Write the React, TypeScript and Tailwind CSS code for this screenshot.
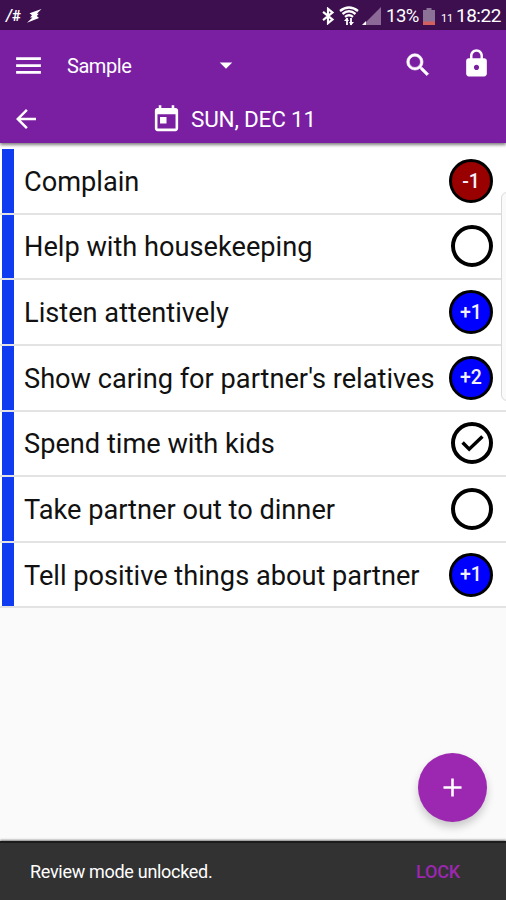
import type { ReactNode } from "react";

type Mark = "empty" | "check" | "minus" | "plus";

interface Item {
  label: string;
  mark: Mark;
  value?: string;
}

const items: Item[] = [
  { label: "Complain", mark: "minus", value: "-1" },
  { label: "Help with housekeeping", mark: "empty" },
  { label: "Listen attentively", mark: "plus", value: "+1" },
  { label: "Show caring for partner's relatives", mark: "plus", value: "+2" },
  { label: "Spend time with kids", mark: "check" },
  { label: "Take partner out to dinner", mark: "empty" },
  { label: "Tell positive things about partner", mark: "plus", value: "+1" },
];

function Icon({ className, children }: { className: string; children: ReactNode }) {
  return (
    <svg viewBox="0 0 24 24" fill="currentColor" className={`block shrink-0 ${className}`}>
      {children}
    </svg>
  );
}

function StatusBar() {
  return (
    <div className="flex h-[30px] shrink-0 items-center bg-[#3d0f4f] pl-[6px] pr-[4px] pt-[2px] text-white">
      <span className="text-[16px] font-medium italic leading-none">/</span>
      <span className="text-[15px] font-bold leading-none">#</span>
      <svg viewBox="0 0 15 14" className="ml-[6px] h-[14px] w-[15px]" fill="currentColor">
        <path d="M14.500 0 2.500 4.200 5 6.300 3 8.400h2.500L0 13.800l12-4.800-2.200-2 2-2.200H9.800z" />
      </svg>
      <div className="flex-1" />
      <svg viewBox="0 0 14 20" className="h-[18px] w-[14px]" fill="none" stroke="currentColor" strokeWidth="2.4">
        <path d="M1.500 5.500 12 14l-5 4V2l5 4L1.500 14.500" />
      </svg>
      <svg viewBox="0 0 20 20" className="ml-[4px] h-[20px] w-[20px]" fill="none" stroke="currentColor">
        <path d="M1 5Q10-2 19 5M3.500 8Q10 2.500 16.500 8M6 10.800q4-3 8 0" strokeWidth="2.300" />
        <path d="M8 12v7M12 12v7" strokeWidth="1.800" />
        <path d="m5 15 3-3.500 2 3.500zM10 16l2 3.500 3-3.500z" fill="currentColor" stroke="none" />
      </svg>
      <svg viewBox="0 0 20 19" className="ml-[3px] h-[19px] w-[20px]">
        <path d="M19 0v18H1z" fill="#8d6998" />
        <path d="M4 14v4H0z" fill="white" />
      </svg>
      <span className="ml-[4px] w-[33px] whitespace-nowrap text-[18.500px] leading-[20px] tracking-[-0.500px]">13%</span>
      <svg viewBox="0 0 12 17" className="ml-[4px] h-[17px] w-[12px]">
        <path d="M3.500 0h5v2H12v15H0V2h3.500z" fill="#8d7297" />
        <path d="M0 13.500h12V17H0z" fill="#d1605e" />
      </svg>
      <span className="ml-[6px] w-[11px] pt-[5px] text-[11px] leading-none tracking-[-0.300px]">11</span>
      <span className="ml-[4px] w-[46px] whitespace-nowrap text-[19px] leading-[20px] tracking-[-0.500px]">18:22</span>
    </div>
  );
}

function Header() {
  return (
    <header className="z-10 h-[113px] shrink-0 bg-[#7b1fa2] text-white shadow-[0_2px_3px_rgba(0,0,0,0.5)]">
      <div className="flex h-[70px] items-center">
        <Icon className="ml-[12px] size-[33px]">
          <path d="M3 18h18v-2H3v2zm0-5h18v-2H3v2zm0-7v2h18V6H3z" />
        </Icon>
        <span className="ml-[22px] w-[136px] pt-px text-[20px] leading-[24px] tracking-[-0.450px]">Sample</span>
        <Icon className="ml-[8px] size-[30px]">
          <path d="m7 10 5 5 5-5z" />
        </Icon>
        <div className="flex-1" />
        <Icon className="mr-[28px] size-[30px]">
          <path d="M15.500 14h-.79l-.28-.27A6.471 6.471 0 0 0 16 9.500 6.500 6.500 0 1 0 9.500 16c1.610 0 3.090-.59 4.230-1.570l.27.28v.79l5 4.990L20.490 19l-4.990-5zm-6 0C7.010 14 5 11.990 5 9.500S7.010 5 9.500 5 14 7.010 14 9.500 11.990 14 9.500 14z" stroke="currentColor" strokeWidth="0.500" />
        </Icon>
        <Icon className="mb-[3px] mr-[14px] size-[31px]">
          <path d="M18 8h-1V6c0-2.760-2.240-5-5-5S7 3.240 7 6v2H6c-1.100 0-2 .9-2 2v10c0 1.100.9 2 2 2h12c1.100 0 2-.9 2-2V10c0-1.100-.9-2-2-2zm-6 9c-1.100 0-2-.9-2-2s.9-2 2-2 2 .9 2 2-.9 2-2 2zm3.100-9H8.900V6c0-1.710 1.390-3.100 3.100-3.100s3.100 1.390 3.100 3.100v2z" />
        </Icon>
      </div>
      <div className="flex h-[38px] items-center">
        <Icon className="ml-[11px] size-[30px]">
          <path d="M20 11H7.830l5.590-5.590L12 4l-8 8 8 8 1.410-1.410L7.830 13H20v-2z" />
        </Icon>
        <Icon className="ml-[110px] size-[31px]">
          <path d="M19 3h-1V1h-2v2H8V1H6v2H5c-1.110 0-1.990.9-1.990 2L3 19c0 1.100.89 2 2 2h14c1.100 0 2-.9 2-2V5c0-1.100-.9-2-2-2zm0 16H5V8h14v11zM7 10h5v5H7v-5z" />
        </Icon>
        <span className="ml-[9px] whitespace-nowrap text-[22.500px] leading-[28px] tracking-[-0.200px]">SUN, DEC 11</span>
      </div>
    </header>
  );
}

function MarkBadge({ mark, value }: { mark: Mark; value?: string }) {
  if (mark === "minus" || mark === "plus") {
    return (
      <span
        className={`mr-[13px] flex size-[44px] items-center justify-center rounded-full border-[3px] border-black pt-px text-[19.500px] font-medium leading-none text-[#f4f0ff] ${
          mark === "minus" ? "bg-[#990000]" : "bg-[#0000ff]"
        }`}
      >
        {value}
      </span>
    );
  }
  return (
    <span className="mr-[13px] flex size-[42px] items-center justify-center rounded-full border-4 border-black">
      {mark === "check" && (
        <svg viewBox="0 0 24 18" className="h-[17px] w-[23px]" fill="none" stroke="black" strokeWidth="3.700">
          <path d="m1.500 8 7 7L22.500 1.500" />
        </svg>
      )}
    </span>
  );
}

export default function App() {
  return (
    <div className="relative flex h-[900px] w-[506px] flex-col overflow-hidden bg-[#fafafa] font-[Roboto,'Liberation_Sans',sans-serif]">
      <StatusBar />
      <Header />
      <ul className="bg-white pt-[6px]">
        {items.map((item) => (
          <li key={item.label} className="flex h-[65.640px] items-center border-b-2 border-[#e3e3e3] pl-[2px]">
            <span className="h-full w-[12px] bg-[#0f3cf0]" />
            <span className="ml-[10px] flex-1 whitespace-nowrap pt-[2px] text-[27.200px] leading-[32px] text-[#111]">
              {item.label}
            </span>
            <MarkBadge mark={item.mark} value={item.value} />
          </li>
        ))}
      </ul>
      <div className="flex-1" />
      <div className="flex h-[59px] shrink-0 items-center justify-between border-t-2 border-[#1c1c1c] bg-[#323232] pl-[30px] pr-[46px] shadow-[0_-1px_2px_rgba(0,0,0,0.5)]">
        <span className="text-[18px] leading-[24px] tracking-[-0.300px] text-white">Review mode unlocked.</span>
        <span className="text-[18px] font-medium leading-[24px] tracking-[-0.200px] text-[#9c27b0]">LOCK</span>
      </div>
      <div className="absolute right-[-8px] top-[192px] h-[209px] w-[13px] rounded-[6px] border border-[#d9d9d9] bg-[#fafafa]" />
      <button
        aria-label="Add"
        className="absolute left-[418px] top-[753px] flex size-[69px] items-center justify-center rounded-full bg-[#9c27b0] text-white shadow-[0_5px_8px_rgba(0,0,0,0.2)]"
      >
        <Icon className="size-[31px]">
          <path d="M19 13h-6v6h-2v-6H5v-2h6V5h2v6h6v2z" />
        </Icon>
      </button>
    </div>
  );
}
